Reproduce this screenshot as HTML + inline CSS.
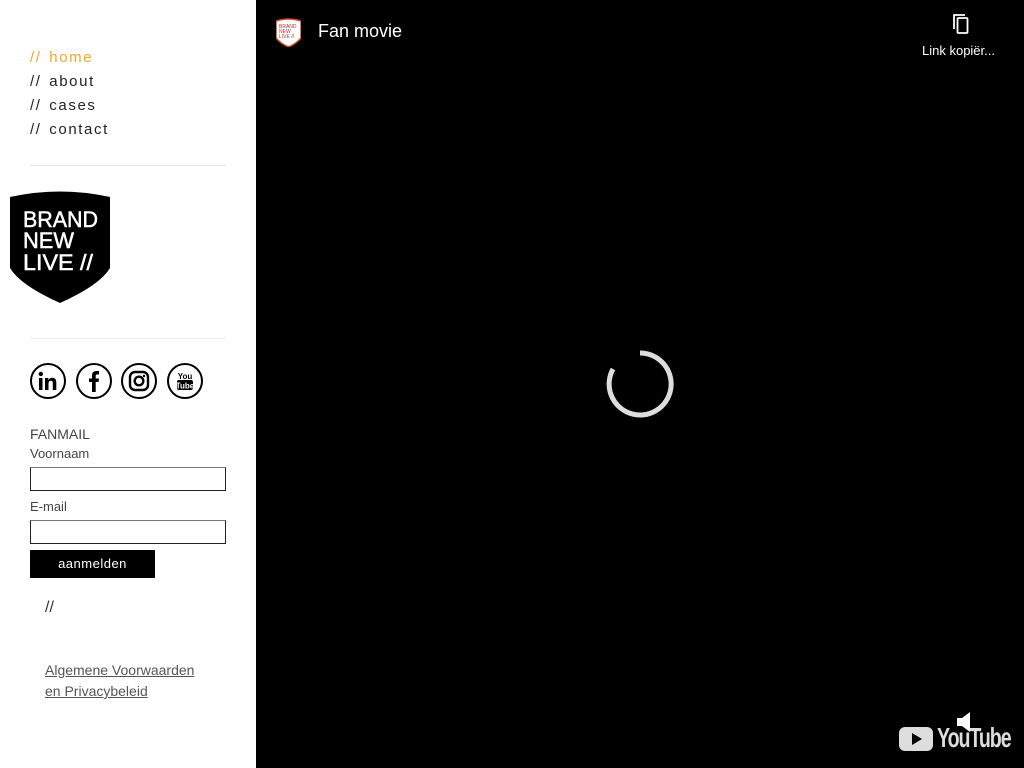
<!DOCTYPE html>
<html><head><meta charset="utf-8"><style>
*{margin:0;padding:0;box-sizing:border-box}
body{width:1024px;height:768px;overflow:hidden;background:#fff;font-family:"Liberation Sans",sans-serif;position:relative}
.side{position:absolute;left:0;top:0;width:256px;height:768px;background:#fff}
.nav{position:absolute;left:30px;top:46px;font-size:15px;letter-spacing:1.6px;line-height:24px;color:#222;word-spacing:2px}
.nav .h{color:#f5a623}
.hr{position:absolute;left:30px;width:196px;height:1px;background:#e4e4e4}
.t{position:absolute;color:#444;font-size:13px}
.inp{position:absolute;left:30px;width:196px;height:24px;border:1px solid #222;border-top-color:#777}
.btn{position:absolute;left:30px;top:550px;width:125px;height:28px;background:#000;color:#fff;font-size:13px;text-align:center;line-height:28px;letter-spacing:.5px}
.video{position:absolute;left:256px;top:0;width:768px;height:768px;background:#000;color:#fff}
</style></head><body>
<div class="side">
<div class="nav"><div class="h">// home</div><div>// about</div><div>// cases</div><div>// contact</div></div>
<div class="hr" style="top:165px"></div>
<svg style="position:absolute;left:10px;top:190px" width="100" height="113" viewBox="0 0 100 113">
<path d="M0 7 Q50 -4 100 7 V78 Q90 95 50 113 Q10 95 0 78Z" fill="#000"/>
<text x="13" y="37" fill="#fff" font-family="Liberation Sans" font-size="22" stroke="#fff" stroke-width=".5" textLength="75" lengthAdjust="spacingAndGlyphs">BRAND</text>
<text x="13" y="58" fill="#fff" font-family="Liberation Sans" font-size="22" stroke="#fff" stroke-width=".5" textLength="51" lengthAdjust="spacingAndGlyphs">NEW</text>
<text x="13" y="80" fill="#fff" font-family="Liberation Sans" font-size="22" stroke="#fff" stroke-width=".5" textLength="70" lengthAdjust="spacingAndGlyphs">LIVE //</text>
</svg>
<div class="hr" style="top:338px;background:#eee"></div>
<svg style="position:absolute;left:30px;top:363px" width="175" height="38" viewBox="0 0 175 38">
<g fill="none" stroke="#000" stroke-width="2"><circle cx="18" cy="18" r="17"/><circle cx="64" cy="18" r="17"/><circle cx="109" cy="18" r="17"/><circle cx="155" cy="18" r="17"/></g>
<rect x="9" y="15" width="3.5" height="12" fill="#000"/><circle cx="10.8" cy="11" r="2.2" fill="#000"/>
<path d="M15 27V15h3.3v2q1.5-2.3 4-2.3 4 0 4 4.5V27h-3.5v-7q0-2.2-2-2.2t-2.3 2.2V27z" fill="#000"/>
<path d="M62 29V19h-3v-3.5h3v-3q0-4.5 4.5-4.5H69v3.5h-2q-1.3 0-1.3 1.3v2.7H69l-.5 3.5h-2.8V29z" fill="#000"/>
<rect x="100" y="9" width="18" height="18" rx="5" fill="none" stroke="#000" stroke-width="2.4"/><circle cx="109" cy="18" r="4.3" fill="none" stroke="#000" stroke-width="2.4"/><circle cx="114" cy="13" r="1.2" fill="#000"/>
<text x="155" y="16" text-anchor="middle" font-size="8" font-weight="bold" font-family="Liberation Sans">You</text>
<rect x="147" y="17" width="16" height="10" rx="2" fill="#000"/><text x="155" y="25.5" text-anchor="middle" font-size="8" fill="#fff" font-weight="bold" font-family="Liberation Sans">Tube</text>
</svg>
<div class="t" style="left:30px;top:426px;font-size:14px">FANMAIL</div>
<div class="t" style="left:30px;top:446px">Voornaam</div>
<div class="inp" style="top:467px"></div>
<div class="t" style="left:30px;top:499px">E-mail</div>
<div class="inp" style="top:520px"></div>
<div class="btn">aanmelden</div>
<div class="t" style="left:45px;top:599px;font-size:16px;color:#333">//</div>
<div class="t" style="left:45px;top:660px;font-size:14px;line-height:21px;text-decoration:underline;color:#555">Algemene Voorwaarden<br>en Privacybeleid</div>
</div>
<div class="video">
<svg style="position:absolute;left:20px;top:18px" width="25" height="29" viewBox="0 0 25 29"><path d="M0 3Q12.5-1 25 3V20Q20 26 12.5 29Q5 26 0 20Z" fill="#fff" stroke="#c94a1a" stroke-width="1.5"/><text x="3" y="10" font-size="5" font-family="Liberation Sans" fill="#a33">BRAND</text><text x="3" y="15" font-size="5" font-family="Liberation Sans" fill="#a33">NEW</text><text x="3" y="20" font-size="5" font-family="Liberation Sans" fill="#a33">LIVE //</text></svg>
<div style="position:absolute;left:62px;top:21px;font-size:18px">Fan movie</div>
<svg style="position:absolute;left:696px;top:13px" width="20" height="22" viewBox="0 0 20 22"><path d="M2 16V2h11" fill="none" stroke="#fff" stroke-width="1.8"/><rect x="5.5" y="5" width="10" height="15" rx="1" fill="none" stroke="#fff" stroke-width="1.8"/></svg>
<div style="position:absolute;left:666px;top:43px;font-size:13px">Link kopiër...</div>
<svg style="position:absolute;left:350px;top:350px" width="68" height="68" viewBox="0 0 68 68"><path d="M34 3A31 31 0 1 1 7 19" fill="none" stroke="#ddd" stroke-width="5"/></svg>
<svg style="position:absolute;left:700px;top:712px" width="16" height="20" viewBox="0 0 16 20"><path d="M1 6h5l8-6v20l-8-6H1z" fill="#fff"/></svg>
<svg style="position:absolute;left:643px;top:727px" width="36" height="26" viewBox="0 0 36 26"><rect width="34" height="24" rx="6" fill="#ddd"/><path d="M13 6l10 6-10 6z" fill="#000"/></svg>
<div style="position:absolute;left:681px;top:722px;font-size:28px;font-weight:bold;color:#ddd;letter-spacing:-1.5px;transform:scaleX(.7);transform-origin:left">YouTube</div>
</div>
</body></html>
